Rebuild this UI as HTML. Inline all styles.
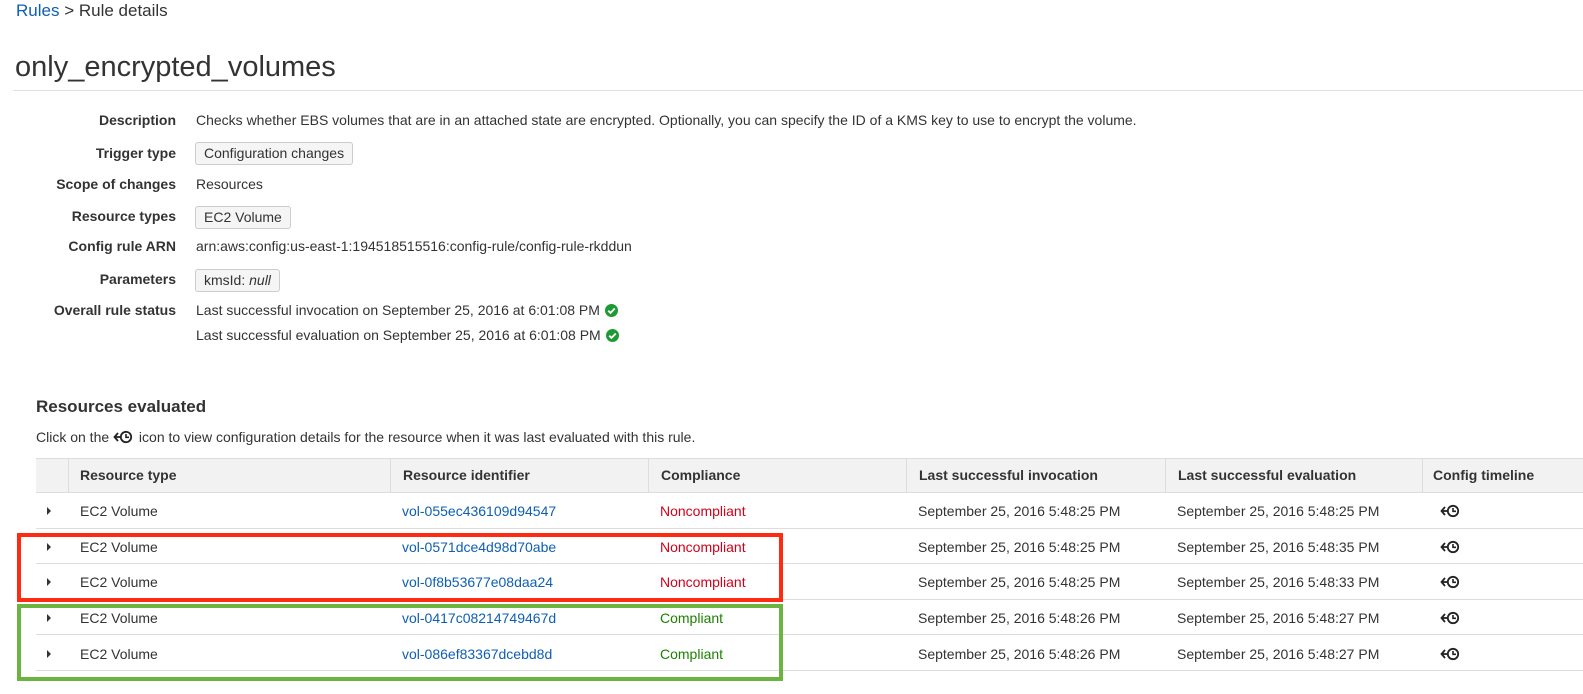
<!DOCTYPE html>
<html><head><style>
body{margin:0;width:1583px;height:694px;background:#fff;font-family:"Liberation Sans",sans-serif;font-size:14px;color:#333;position:relative;overflow:hidden}
.a{position:absolute;white-space:nowrap;line-height:16px}
.l{position:absolute;right:1407px;font-weight:bold;white-space:nowrap;line-height:16px}
.v{position:absolute;left:196px;white-space:nowrap;line-height:16px}
.btn{position:absolute;left:195px;height:23px;line-height:21px;padding:0 8px;border:1px solid #ccc;border-radius:3px;background:#f5f5f5;box-sizing:border-box}
.chk{display:inline-block;vertical-align:-2px;margin-left:5px}
.hr{position:absolute;height:1px;background:#ddd}
.vl{position:absolute;width:1px;background:#ddd;top:458px;height:35px}
.th{position:absolute;top:467px;font-weight:bold;line-height:16px}
.tri{position:absolute;left:47px;width:0;height:0;border-top:4px solid transparent;border-bottom:4px solid transparent;border-left:4px solid #333}
.link{color:#0e5fb4}.nc{color:#d0021b}.c{color:#1d8102}
</style></head><body>
<div class="a" style="left:16px;top:1px;font-size:17px;line-height:20px"><span class="link">Rules</span> &gt; Rule details</div>
<div class="a" style="left:15px;top:49px;font-size:29px;line-height:36px;color:#333">only_encrypted_volumes</div>
<div class="hr" style="left:13px;right:0;top:90px;background:#e0e0e0"></div>

<div class="l" style="top:112px">Description</div>
<div class="v" style="top:112px">Checks whether EBS volumes that are in an attached state are encrypted. Optionally, you can specify the ID of a KMS key to use to encrypt the volume.</div>
<div class="l" style="top:145px">Trigger type</div>
<div class="btn" style="top:142px">Configuration changes</div>
<div class="l" style="top:176px">Scope of changes</div>
<div class="v" style="top:176px">Resources</div>
<div class="l" style="top:208px">Resource types</div>
<div class="btn" style="top:206px">EC2 Volume</div>
<div class="l" style="top:238px">Config rule ARN</div>
<div class="v" style="top:238px">arn:aws:config:us-east-1:194518515516:config-rule/config-rule-rkddun</div>
<div class="l" style="top:271px">Parameters</div>
<div class="btn" style="top:269px">kmsId: <i>null</i></div>
<div class="l" style="top:302px">Overall rule status</div>
<div class="v" style="top:302px">Last successful invocation on September 25, 2016 at 6:01:08 PM<svg class="chk" width="13" height="13" viewBox="0 0 14 14"><circle cx="7" cy="7" r="7" fill="#1d9a32"/><path d="M3.5 7.2l2.4 2.4 4.6-4.8" stroke="#fff" stroke-width="2" fill="none"/></svg></div>
<div class="v" style="top:327px">Last successful evaluation on September 25, 2016 at 6:01:08 PM<svg class="chk" width="13" height="13" viewBox="0 0 14 14"><circle cx="7" cy="7" r="7" fill="#1d9a32"/><path d="M3.5 7.2l2.4 2.4 4.6-4.8" stroke="#fff" stroke-width="2" fill="none"/></svg></div>

<div class="a" style="left:36px;top:397px;font-size:17px;font-weight:bold;line-height:20px">Resources evaluated</div>
<div class="a" style="left:36px;top:429px">Click on the <svg width="22" height="14" viewBox="0 0 22 14" style="vertical-align:-2px"><path d="M5 3L1.5 7 5 11" stroke="#222" stroke-width="1.8" fill="none"/><path d="M1.5 7H7" stroke="#222" stroke-width="1.8"/><circle cx="13" cy="7" r="5.2" stroke="#222" stroke-width="1.8" fill="none"/><path d="M13 4v3.3h3" stroke="#222" stroke-width="1.6" fill="none"/></svg> icon to view configuration details for the resource when it was last evaluated with this rule.</div>

<div style="position:absolute;left:36px;right:0;top:458px;height:35px;background:#f2f2f2;border-top:1px solid #ddd;border-bottom:1px solid #ddd;box-sizing:border-box"></div>
<div class="vl" style="left:68px"></div><div class="vl" style="left:390px"></div><div class="vl" style="left:648px"></div><div class="vl" style="left:906px"></div><div class="vl" style="left:1165px"></div><div class="vl" style="left:1422px"></div>
<div class="th" style="left:80px">Resource type</div>
<div class="th" style="left:403px">Resource identifier</div>
<div class="th" style="left:661px">Compliance</div>
<div class="th" style="left:919px">Last successful invocation</div>
<div class="th" style="left:1178px">Last successful evaluation</div>
<div class="th" style="left:1433px">Config timeline</div>

<div class="hr" style="left:36px;right:0;top:528px"></div>
<div class="hr" style="left:36px;right:0;top:563px"></div>
<div class="hr" style="left:36px;right:0;top:599px"></div>
<div class="hr" style="left:36px;right:0;top:634px"></div>
<div class="hr" style="left:36px;right:0;top:670px"></div>

<div class="tri" style="top:507px"></div><div class="a" style="left:80px;top:503px">EC2 Volume</div><div class="a link" style="left:402px;top:503px">vol-055ec436109d94547</div><div class="a nc" style="left:660px;top:503px">Noncompliant</div><div class="a" style="left:918px;top:503px">September 25, 2016 5:48:25 PM</div><div class="a" style="left:1177px;top:503px">September 25, 2016 5:48:25 PM</div>
<div class="tri" style="top:543px"></div><div class="a" style="left:80px;top:539px">EC2 Volume</div><div class="a link" style="left:402px;top:539px">vol-0571dce4d98d70abe</div><div class="a nc" style="left:660px;top:539px">Noncompliant</div><div class="a" style="left:918px;top:539px">September 25, 2016 5:48:25 PM</div><div class="a" style="left:1177px;top:539px">September 25, 2016 5:48:35 PM</div>
<div class="tri" style="top:578px"></div><div class="a" style="left:80px;top:574px">EC2 Volume</div><div class="a link" style="left:402px;top:574px">vol-0f8b53677e08daa24</div><div class="a nc" style="left:660px;top:574px">Noncompliant</div><div class="a" style="left:918px;top:574px">September 25, 2016 5:48:25 PM</div><div class="a" style="left:1177px;top:574px">September 25, 2016 5:48:33 PM</div>
<div class="tri" style="top:614px"></div><div class="a" style="left:80px;top:610px">EC2 Volume</div><div class="a link" style="left:402px;top:610px">vol-0417c08214749467d</div><div class="a c" style="left:660px;top:610px">Compliant</div><div class="a" style="left:918px;top:610px">September 25, 2016 5:48:26 PM</div><div class="a" style="left:1177px;top:610px">September 25, 2016 5:48:27 PM</div>
<div class="tri" style="top:650px"></div><div class="a" style="left:80px;top:646px">EC2 Volume</div><div class="a link" style="left:402px;top:646px">vol-086ef83367dcebd8d</div><div class="a c" style="left:660px;top:646px">Compliant</div><div class="a" style="left:918px;top:646px">September 25, 2016 5:48:26 PM</div><div class="a" style="left:1177px;top:646px">September 25, 2016 5:48:27 PM</div>

<svg style="position:absolute;left:1440px;top:504px" width="22" height="14" viewBox="0 0 22 14"><path d="M5 3L1.5 7 5 11" stroke="#222" stroke-width="1.8" fill="none"/><path d="M1.5 7H7" stroke="#222" stroke-width="1.8"/><circle cx="13" cy="7" r="5.2" stroke="#222" stroke-width="1.8" fill="none"/><path d="M13 4v3.3h3" stroke="#222" stroke-width="1.6" fill="none"/></svg>
<svg style="position:absolute;left:1440px;top:540px" width="22" height="14" viewBox="0 0 22 14"><path d="M5 3L1.5 7 5 11" stroke="#222" stroke-width="1.8" fill="none"/><path d="M1.5 7H7" stroke="#222" stroke-width="1.8"/><circle cx="13" cy="7" r="5.2" stroke="#222" stroke-width="1.8" fill="none"/><path d="M13 4v3.3h3" stroke="#222" stroke-width="1.6" fill="none"/></svg>
<svg style="position:absolute;left:1440px;top:575px" width="22" height="14" viewBox="0 0 22 14"><path d="M5 3L1.5 7 5 11" stroke="#222" stroke-width="1.8" fill="none"/><path d="M1.5 7H7" stroke="#222" stroke-width="1.8"/><circle cx="13" cy="7" r="5.2" stroke="#222" stroke-width="1.8" fill="none"/><path d="M13 4v3.3h3" stroke="#222" stroke-width="1.6" fill="none"/></svg>
<svg style="position:absolute;left:1440px;top:611px" width="22" height="14" viewBox="0 0 22 14"><path d="M5 3L1.5 7 5 11" stroke="#222" stroke-width="1.8" fill="none"/><path d="M1.5 7H7" stroke="#222" stroke-width="1.8"/><circle cx="13" cy="7" r="5.2" stroke="#222" stroke-width="1.8" fill="none"/><path d="M13 4v3.3h3" stroke="#222" stroke-width="1.6" fill="none"/></svg>
<svg style="position:absolute;left:1440px;top:647px" width="22" height="14" viewBox="0 0 22 14"><path d="M5 3L1.5 7 5 11" stroke="#222" stroke-width="1.8" fill="none"/><path d="M1.5 7H7" stroke="#222" stroke-width="1.8"/><circle cx="13" cy="7" r="5.2" stroke="#222" stroke-width="1.8" fill="none"/><path d="M13 4v3.3h3" stroke="#222" stroke-width="1.6" fill="none"/></svg>

<div style="position:absolute;left:17px;top:533px;width:766px;height:69px;border:4px solid #ff2a12;box-sizing:border-box"></div>
<div style="position:absolute;left:17px;top:604px;width:766px;height:77px;border:4px solid #6cb33f;box-sizing:border-box"></div>
</body></html>
